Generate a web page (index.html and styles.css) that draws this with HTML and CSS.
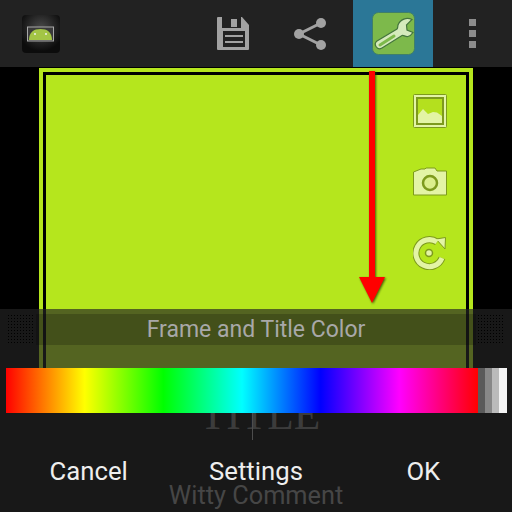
FILE: index.html
```html
<!DOCTYPE html>
<html lang="en">
<head>
    <meta charset="UTF-8">
    <meta name="viewport" content="width=device-width, initial-scale=1.0">
    <title>Frame and Title Color</title>
    <link rel="stylesheet" href="styles.css">
</head>
<body>
    <header class="action-bar">
        <div class="app-icon">
            <svg width="38" height="38" viewBox="0 0 38 38">
                <defs>
                    <radialGradient id="glow" cx="50%" cy="35%" r="60%">
                        <stop offset="0" stop-color="#4a4a4a"/>
                        <stop offset="1" stop-color="#0c0c0c"/>
                    </radialGradient>
                </defs>
                <rect width="38" height="38" rx="4" fill="url(#glow)"/>
                <rect x="5.500" y="12" width="26" height="14" fill="#3a3a3a" stroke="#a8a8a8"/>
                <path d="M7 25 C7 17 12 14 18.500 14 C25 14 30 17 30 25 Z" fill="#a3c545"/>
                <circle cx="13" cy="19" r="1" fill="#eee"/>
                <circle cx="24" cy="19" r="1" fill="#eee"/>
            </svg>
        </div>
        <div class="action-items">
            <button class="action">
                <svg width="32" height="33" viewBox="0 0 32 33">
                    <path d="M0 1 Q0 0 1 0 H25 L32 8 V32 Q32 33 31 33 H1 Q0 33 0 32 Z" fill="#a2a2a2"/>
                    <rect x="5" y="0" width="19" height="11" fill="#222"/>
                    <rect x="14" y="2" width="6" height="8" fill="#a2a2a2"/>
                    <rect x="6" y="14" width="22" height="16" fill="#222"/>
                    <rect x="8" y="18" width="18" height="2" fill="#a2a2a2"/>
                    <rect x="8" y="24" width="18" height="2" fill="#a2a2a2"/>
                </svg>
            </button>
            <button class="action">
                <svg width="40" height="34" viewBox="0 0 40 34">
                    <path d="M28 6 L6 17 L28 28" fill="none" stroke="#a2a2a2" stroke-width="3"/>
                    <circle cx="28" cy="6" r="5" fill="#a2a2a2"/>
                    <circle cx="6" cy="17" r="5" fill="#a2a2a2"/>
                    <circle cx="28" cy="28" r="5" fill="#a2a2a2"/>
                </svg>
            </button>
            <button class="action active">
                <svg width="43" height="43" viewBox="0 0 43 43">
                    <rect x="0.500" y="0.500" width="42" height="42" rx="6" fill="#7db94b" stroke="#3f7f6a"/>
                    <path d="M40 7.500 C35 5 28 7 26 13 C25.500 15 26 16 25 17 L5 29 C1 32 5 39 10 36 L30 23.500 C32 23 33 25 36 24.500 C38 24 40 22 41 20.500 L35 18 L34.500 13 Z" fill="#d5eabc" stroke="#44753c" stroke-width="1.200"/>
                    <path d="M8 33 L22 24" stroke="#7db94b" stroke-width="3" stroke-linecap="round"/>
                </svg>
            </button>
            <button class="action action-more">
                <span class="overflow">
                    <i></i><i></i><i></i>
                </span>
            </button>
        </div>
    </header>

    <main class="stage">
        <div class="frame">
            <div class="frame-inner">
                <div class="tools">
                    <svg width="34" height="34" viewBox="0 0 34 34">
                        <rect x="0.500" y="0.500" width="33" height="33" rx="1" fill="#e3f4a5" stroke="#7d9a1c"/>
                        <rect x="4" y="4" width="26" height="26" fill="#b4e01e" stroke="#7d9a1c" stroke-width="2"/>
                        <path d="M5 21 L10 15 L15 20 L20 18 L24 18.500 L29 22 V29 H5 Z" fill="#e3f4a5"/>
                    </svg>
                    <svg width="34" height="34" viewBox="0 0 34 34">
                        <path d="M0.500 7 L8 4 L12 4 L13 3 H22 L24 6 H33.500 V30 H0.500 Z" fill="#e3f4a5" stroke="#7d9a1c" stroke-linejoin="round"/>
                        <circle cx="17" cy="18" r="7" fill="#dcef8c" stroke="#7d9a1c" stroke-width="2.500"/>
                    </svg>
                    <svg width="34" height="34" viewBox="0 0 34 34">
                        <path d="M29 22 A13.500 13.500 0 1 1 24 6" fill="none" stroke="#7d9a1c" stroke-width="7"/>
                        <path d="M23 3 L32.500 1.500 L32 13 Z" fill="#e3f4a5" stroke="#7d9a1c" stroke-linejoin="round"/>
                        <path d="M29 22 A13.500 13.500 0 1 1 24 6" fill="none" stroke="#e3f4a5" stroke-width="5"/>
                        <circle cx="16" cy="17" r="3.500" fill="#e3f4a5" stroke="#7d9a1c" stroke-width="1.500"/>
                    </svg>
                </div>
            </div>
            <svg class="arrow" width="30" height="234" viewBox="0 0 30 234">
                <path d="M12 0 H18 V206 H28 L15 232 L2 206 H12 Z" fill="#ff0000"/>
            </svg>
        </div>
        <div class="ghost-title">TITLE<span class="cursor"></span></div>
        <div class="ghost-comment">Witty Comment</div>

        <section class="sheet">
            <div class="sheet-title">
                <span class="dots"></span>
                <h2>Frame and Title Color</h2>
                <span class="dots"></span>
            </div>
            <div class="color-bar">
                <div class="hues"></div>
                <i class="grey-1"></i>
                <i class="grey-2"></i>
                <i class="grey-3"></i>
                <i class="grey-4"></i>
            </div>
            <div class="buttons">
                <button>Cancel</button>
                <button>Settings</button>
                <button>OK</button>
            </div>
        </section>
    </main>
</body>
</html>
```

FILE: styles.css
```css
body {
    margin: 0;
    width: 512px;
    height: 512px;
    overflow: hidden;
    background-color: #000;
    font-family: Roboto, "Noto Sans", sans-serif;
    display: flex;
    flex-direction: column;
}
button {
    background: none;
    border: none;
    padding: 0;
    font-family: inherit;
}
.action-bar {
    height: 67px;
    flex-shrink: 0;
    background-color: #222;
    display: flex;
    justify-content: space-between;
    align-items: stretch;
}
.app-icon {
    margin-left: 22px;
    display: flex;
    align-items: center;
}
.action-items {
    display: flex;
}
.action {
    width: 80px;
    display: flex;
    align-items: center;
    justify-content: center;
}
.action-more {
    width: 79px;
}
.active {
    background-color: #2b7797;
}
.overflow {
    display: flex;
    flex-direction: column;
    gap: 4px;
}
.overflow i {
    display: block;
    width: 7px;
    height: 7px;
    background-color: #8c8c8c;
}
.stage {
    position: relative;
    flex: 1;
    display: flex;
    flex-direction: column;
    align-items: center;
}
.frame {
    position: relative;
    box-sizing: border-box;
    width: 434px;
    height: 328px;
    flex-shrink: 0;
    margin-top: 1px;
    border: 4px solid #b5e61d;
    background-color: #000;
    padding: 3px;
}
.frame-inner {
    height: 100%;
    background-color: #b5e61d;
    display: flex;
    justify-content: flex-end;
}
.tools {
    margin-top: 19px;
    margin-right: 19px;
    display: flex;
    flex-direction: column;
    gap: 37px;
}
.arrow {
    position: absolute;
    left: 314px;
    top: -1px;
    filter: drop-shadow(1px 1px 1px rgba(40, 60, 0, 0.8));
}
.ghost-title {
    position: relative;
    margin-left: 8px;
    font-family: "Liberation Serif", serif;
    font-size: 43.5px;
    line-height: 36px;
    color: #6d6d6d;
}
.cursor {
    position: absolute;
    left: 52px;
    top: 8px;
    width: 1px;
    height: 36px;
    background-color: #a0a0a0;
}
.ghost-comment {
    margin-top: 50px;
    font-size: 25.300px;
    line-height: 28px;
    color: #8c8c8c;
}
.sheet {
    position: absolute;
    left: 0;
    right: 0;
    bottom: 0;
    height: 203px;
    background-color: rgba(36, 36, 36, 0.67);
    display: flex;
    flex-direction: column;
    padding-top: 5px;
    box-sizing: border-box;
}
.sheet-title {
    height: 31px;
    display: flex;
    align-items: stretch;
    padding: 0 7px;
}
.sheet-title h2 {
    flex: 1;
    margin: 0 1px;
    background-color: rgba(0, 0, 0, 0.2);
    color: #a8a8a8;
    font-size: 23px;
    font-weight: normal;
    line-height: 32px;
    text-align: center;
}
.dots {
    width: 28px;
    background-image: radial-gradient(#000 0.8px, transparent 1px);
    background-size: 3px 3px;
}
.color-bar {
    margin: 23px 5px 0 6px;
    height: 45px;
    display: flex;
}
.hues {
    flex: 1;
    background: linear-gradient(to right, #f00, #ff0, #0f0, #0ff, #00f, #f0f, #f00);
}
.color-bar i {
    width: 7px;
}
.color-bar .grey-1 {
    background-color: #5a5a5a;
}
.color-bar .grey-2 {
    background-color: #888;
}
.color-bar .grey-3 {
    background-color: #bbb;
}
.color-bar .grey-4 {
    width: 8px;
    background-color: #f4f4f4;
}
.buttons {
    flex: 1;
    display: grid;
    grid-template-columns: repeat(3, 1fr);
    padding: 16px 5px 0;
}
.buttons button {
    color: #eee;
    font-size: 25.700px;
}
```
